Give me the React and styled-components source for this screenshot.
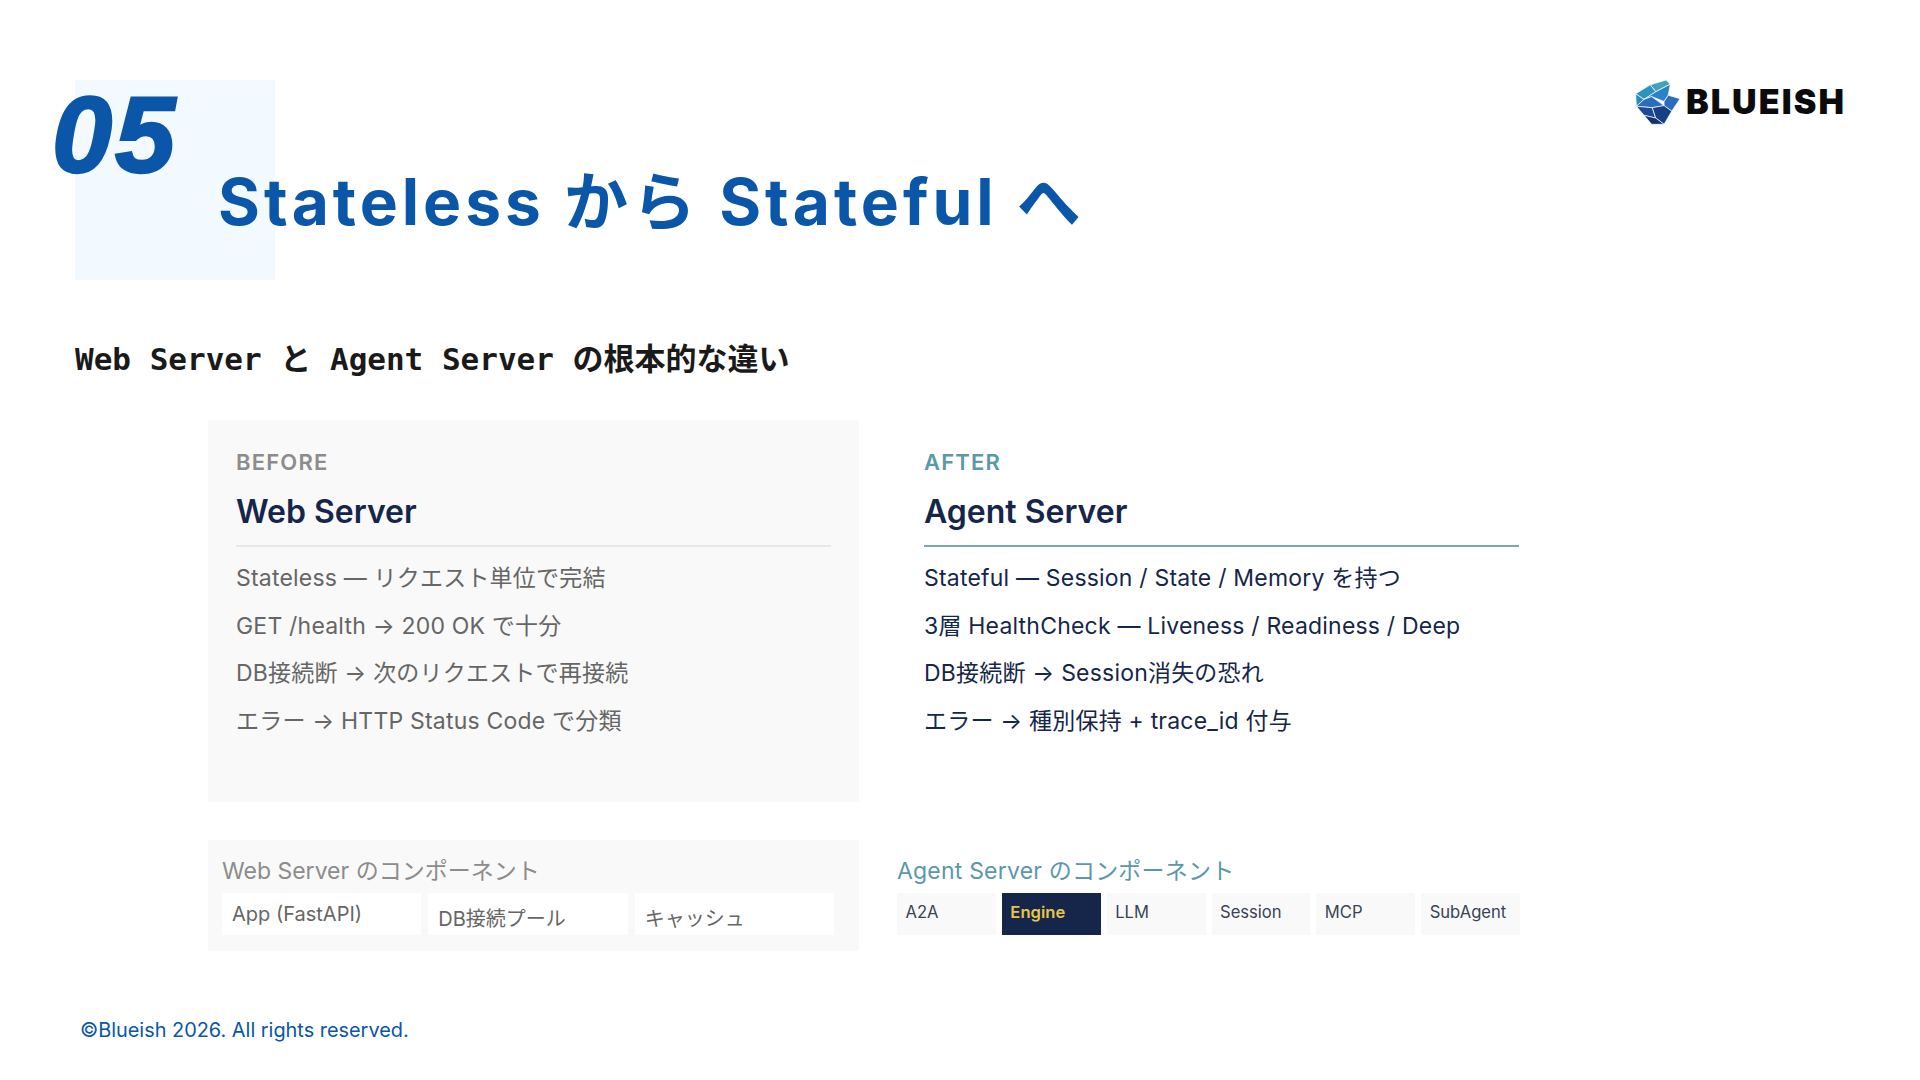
import React from 'react'
import styled, { createGlobalStyle } from 'styled-components'

const SANS = `Inter, "Noto Sans CJK JP", sans-serif`

const GlobalStyle = createGlobalStyle`
  html, body {
    margin: 0;
    background: #fff;
  }
  body {
    font-family: ${SANS};
  }
`

const Slide = styled.div`
  width: 1920px;
  height: 1080px;
  box-sizing: border-box;
  padding: 80px 74px 0 75px;
  display: flex;
  flex-direction: column;
  overflow: hidden;
`

const Header = styled.header`
  position: relative;
  height: 200px;
  display: flex;
  justify-content: space-between;
  align-items: flex-start;
`

const Corner = styled.div`
  position: absolute;
  left: 0;
  top: 0;
  width: 200px;
  height: 200px;
  background: #f2f9ff;
`

const SectionNumber = styled.div`
  position: absolute;
  left: -23px;
  top: -7px;
  font-family: "Liberation Sans", Arial, sans-serif;
  font-size: 108px;
  line-height: 124px;
  font-weight: 700;
  font-style: italic;
  letter-spacing: 3px;
  color: #0a56a8;
  -webkit-text-stroke: 2.5px #0a56a8;
`

const Title = styled.h1`
  position: relative;
  margin: 83px 0 0 143px;
  font-size: 64px;
  line-height: 78px;
  font-weight: 700;
  letter-spacing: 4px;
  color: #0a56a8;
`

const Logo = styled.div`
  display: flex;
  align-items: center;
  gap: 6px;
  height: 44px;
`

const LogoText = styled.span`
  font-size: 34px;
  line-height: 42px;
  font-weight: 900;
  letter-spacing: 2.1px;
  color: #0b0b0d;
`

const Subtitle = styled.h2`
  margin: 56px 0 0;
  font-family: "DejaVu Sans Mono", "Noto Sans CJK JP", monospace;
  font-size: 31px;
  line-height: 46px;
  font-weight: 700;
  color: #1a1a1a;
`

const Columns = styled.div`
  margin: 38px 0 0 133px;
  display: grid;
  grid-template-columns: 651px 651px;
  column-gap: 37px;
`

const Panel = styled.section`
  height: 382px;
  box-sizing: border-box;
  padding: 29px 28px 0;
  background: ${p => (p.$muted ? '#f9f9f9' : 'transparent')};
`

const Tag = styled.div`
  font-size: 22px;
  line-height: 26px;
  font-weight: 600;
  letter-spacing: 1.2px;
  color: ${p => (p.$accent ? '#5b98aa' : '#8c8c8c')};
`

const PanelTitle = styled.h3`
  margin: 17px 0 0;
  padding-bottom: 13px;
  font-size: 32px;
  line-height: 40px;
  font-weight: 600;
  color: #16264a;
  border-bottom: 2px solid ${p => (p.$accent ? '#7da6b8' : '#e8e8e8')};
`

const Points = styled.ul`
  margin: 8px 0 0;
  padding: 0;
  list-style: none;
`

const Point = styled.li`
  font-size: 23px;
  line-height: 47.5px;
  letter-spacing: 0.2px;
  color: ${p => (p.$accent ? '#16264a' : '#666')};
`

const Parts = styled.section`
  margin-top: 38px;
  height: 111px;
  box-sizing: border-box;
  padding: ${p => (p.$muted ? '16px 25px 0 14px' : '16px 27px 0 1px')};
  background: ${p => (p.$muted ? '#f9f9f9' : 'transparent')};
`

const PartsLabel = styled.div`
  font-size: 23px;
  line-height: 30px;
  letter-spacing: ${p => (p.$accent ? '0.2px' : '0')};
  color: ${p => (p.$accent ? '#5b98aa' : '#8c8c8c')};
`

const PartsRow = styled.div`
  margin-top: 7px;
  display: grid;
  grid-template-columns: repeat(${p => p.$count}, 1fr);
  column-gap: ${p => p.$gap}px;
`

const WebPart = styled.div`
  height: 42px;
  box-sizing: border-box;
  padding: ${p => (p.$raised ? '0 0 0 10px' : '7px 0 0 10px')};
  display: flex;
  align-items: center;
  font-size: 20px;
  color: #666;
  background: #fff;
`

const AgentPart = styled.div`
  height: 42px;
  box-sizing: border-box;
  padding: 0 0 5px 8.5px;
  display: flex;
  align-items: center;
  font-size: 16.6px;
  font-weight: ${p => (p.$active ? 600 : 400)};
  color: ${p => (p.$active ? '#e6c547' : '#3a4356')};
  background: ${p => (p.$active ? '#16264a' : '#f9f9f9')};
`

const Footer = styled.footer`
  margin: 66px 0 0 5px;
  font-size: 19.9px;
  line-height: 26px;
  color: #0a56a8;
`

const BlueishMark = () => (
  <svg width="45" height="45" viewBox="0 0 130 130">
    <g stroke="#fff" strokeWidth="2" strokeLinejoin="round">
      <polygon points="44,14 90,0 102,12 60,34" fill="#3ea4b6" />
      <polygon points="2,40 44,14 60,34 26,56" fill="#2b93c0" />
      <polygon points="26,56 60,34 102,12 96,44 84,62 48,48" fill="#2a82c6" />
      <polygon points="2,40 26,56 4,76" fill="#2a88c4" />
      <polygon points="4,76 26,56 48,48 84,74 50,80" fill="#2a6dbc" />
      <polygon points="96,44 130,54 106,90 84,74 84,62" fill="#2a6dbc" />
      <polygon points="4,76 50,80 60,110 26,102" fill="#1c4a98" />
      <polygon points="50,80 84,74 106,90 84,128 60,110" fill="#173f86" />
      <polygon points="26,102 60,110 84,128 48,128" fill="#12336e" />
    </g>
  </svg>
)

const webPoints = [
  'Stateless — リクエスト単位で完結',
  'GET /health → 200 OK で十分',
  'DB接続断 → 次のリクエストで再接続',
  'エラー → HTTP Status Code で分類',
]

const agentPoints = [
  'Stateful — Session / State / Memory を持つ',
  '3層 HealthCheck — Liveness / Readiness / Deep',
  'DB接続断 → Session消失の恐れ',
  'エラー → 種別保持 + trace_id 付与',
]

const agentParts = ['A2A', 'Engine', 'LLM', 'Session', 'MCP', 'SubAgent']

export default function App() {
  return (
    <Slide>
      <GlobalStyle />
      <Header>
        <Corner />
        <SectionNumber>05</SectionNumber>
        <Title>Stateless から Stateful へ</Title>
        <Logo>
          <BlueishMark />
          <LogoText>BLUEISH</LogoText>
        </Logo>
      </Header>

      <Subtitle>Web Server と Agent Server の根本的な違い</Subtitle>

      <Columns>
        <Panel $muted>
          <Tag>BEFORE</Tag>
          <PanelTitle>Web Server</PanelTitle>
          <Points>
            {webPoints.map(text => (
              <Point key={text}>{text}</Point>
            ))}
          </Points>
        </Panel>
        <Panel>
          <Tag $accent>AFTER</Tag>
          <PanelTitle $accent>Agent Server</PanelTitle>
          <Points>
            {agentPoints.map(text => (
              <Point key={text} $accent>{text}</Point>
            ))}
          </Points>
        </Panel>

        <Parts $muted>
          <PartsLabel>Web Server のコンポーネント</PartsLabel>
          <PartsRow $count={3} $gap={7}>
            <WebPart $raised>App (FastAPI)</WebPart>
            <WebPart>DB接続プール</WebPart>
            <WebPart>キャッシュ</WebPart>
          </PartsRow>
        </Parts>
        <Parts>
          <PartsLabel $accent>Agent Server のコンポーネント</PartsLabel>
          <PartsRow $count={6} $gap={6}>
            {agentParts.map(name => (
              <AgentPart key={name} $active={name === 'Engine'}>{name}</AgentPart>
            ))}
          </PartsRow>
        </Parts>
      </Columns>

      <Footer>©Blueish 2026. All rights reserved.</Footer>
    </Slide>
  )
}
